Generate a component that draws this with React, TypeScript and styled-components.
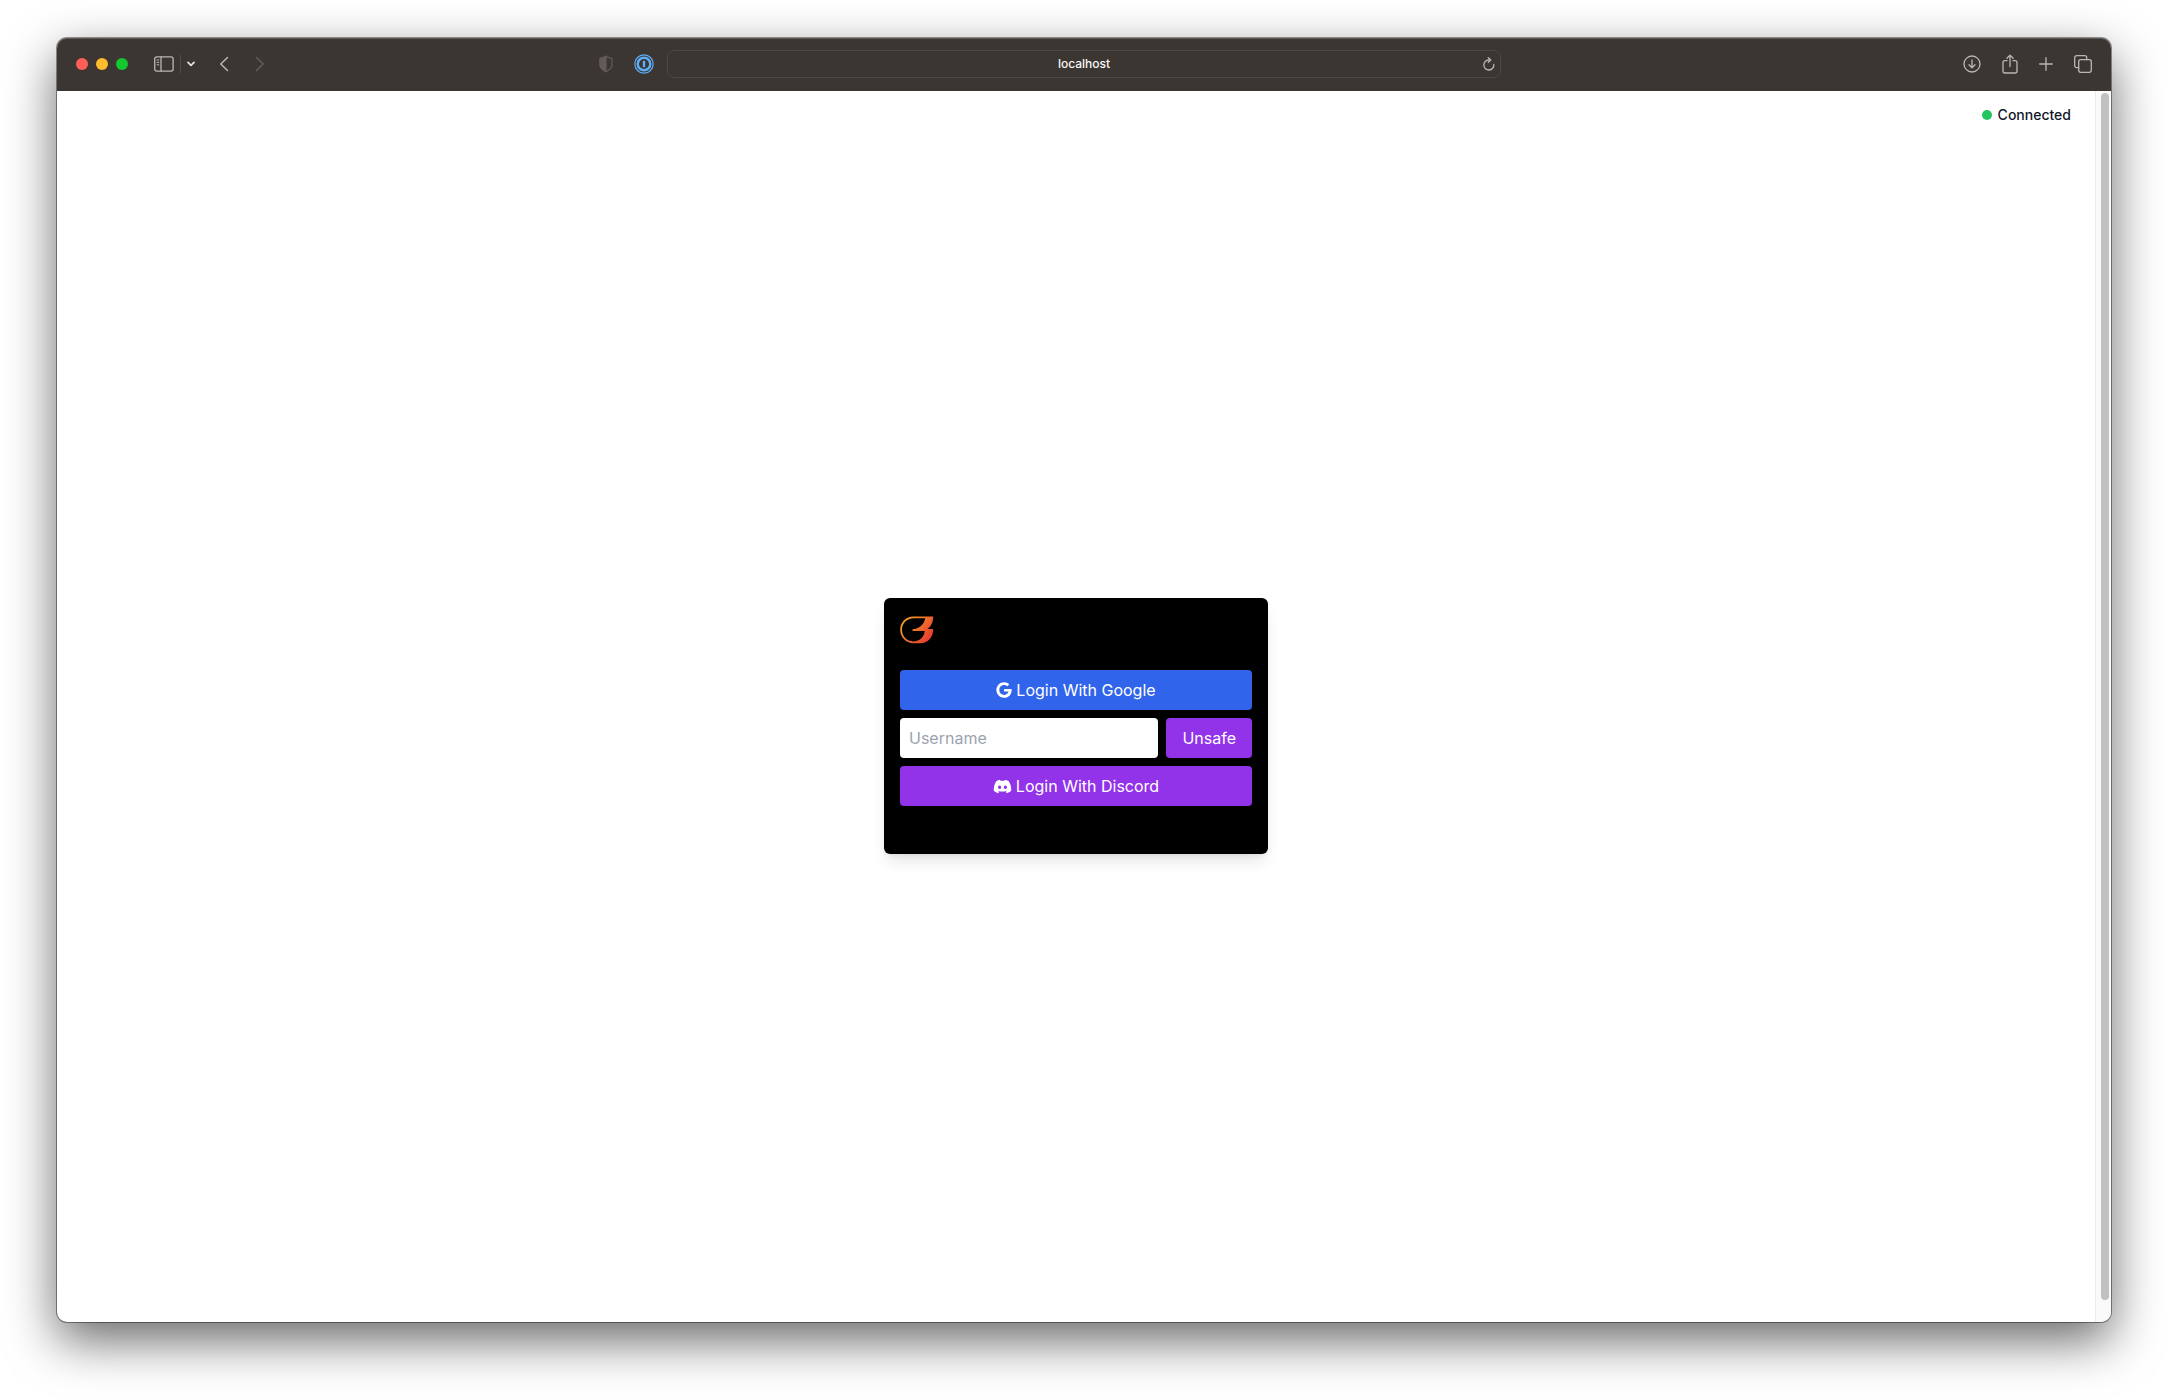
import React from "react";
import styled, { createGlobalStyle } from "styled-components";
import { FaDiscord, FaGoogle } from "react-icons/fa6";

const Global = createGlobalStyle`
  *, *::before, *::after { box-sizing: border-box; }
  body {
    margin: 0;
    background: #fff;
    font-family: Inter, "Liberation Sans", sans-serif;
    color: #0f172a;
  }
  button, input { font: inherit; }
`;

const Desktop = styled.div`
  min-height: 100vh;
  display: flex;
  padding: 38px 57px 75px;
  overflow: hidden;
`;

const Window = styled.div`
  flex: 1;
  min-width: 0;
  display: flex;
  flex-direction: column;
  border-radius: 10px;
  background: #fff;
  box-shadow: 0 0 0 1px rgba(0, 0, 0, 0.4), 0 18px 50px rgba(0, 0, 0, 0.6);
`;

const Toolbar = styled.header`
  display: grid;
  grid-template-columns: 1fr minmax(0, 834px) 1fr;
  align-items: center;
  height: 53px;
  padding: 0 19px 2px;
  border-radius: 10px 10px 0 0;
  background: #3c3633;
  box-shadow: inset 0 1px 0 #5f5a58;
  color: #bbb6b4;
`;

const Group = styled.div<{ $gap?: number; $pad?: string }>`
  display: flex;
  align-items: center;
  gap: ${(p) => p.$gap ?? 0}px;
  padding: ${(p) => p.$pad ?? "0"};
`;

const Side = styled.div<{ $end?: boolean }>`
  display: flex;
  align-items: center;
  justify-content: ${(p) => (p.$end ? "flex-end" : "space-between")};
`;

const Light = styled.button<{ $color: string }>`
  width: 12px;
  height: 12px;
  padding: 0;
  border: 0;
  border-radius: 50%;
  background: ${(p) => p.$color};
`;

const IconButton = styled.button<{ $tone?: string }>`
  display: flex;
  padding: 0;
  border: 0;
  background: none;
  color: ${(p) => p.$tone ?? "inherit"};

  svg {
    display: block;
    fill: none;
    stroke: currentColor;
    stroke-linecap: round;
    stroke-linejoin: round;
  }
`;

const Divider = styled.span`
  width: 1px;
  height: 18px;
  background: #504a48;
`;

const AddressBar = styled.div`
  display: grid;
  grid-template-columns: 14px 1fr 14px;
  align-items: center;
  height: 28px;
  padding: 0 4px;
  border: 1px solid #4e4845;
  border-radius: 7px;
`;

const Address = styled.input`
  grid-column: 2;
  width: 100%;
  padding: 0;
  border: 0;
  outline: 0;
  background: none;
  color: #f8f7f6;
  font-size: 12px;
  font-weight: 500;
  line-height: 16px;
  text-align: center;
`;

const Viewport = styled.div`
  flex: 1;
  display: flex;
`;

const Page = styled.div`
  flex: 1;
  display: flex;
  flex-direction: column;
`;

const StatusBar = styled.div`
  display: flex;
  align-items: center;
  justify-content: flex-end;
  gap: 6px;
  height: 39px;
  padding: 8px 24px 0;
  font-size: 14px;
  font-weight: 500;
  line-height: 20px;
`;

const StatusDot = styled.span`
  width: 10px;
  height: 10px;
  border-radius: 50%;
  background: #22c55e;
`;

const Main = styled.main`
  flex: 1;
  display: flex;
  align-items: center;
  justify-content: center;
`;

const Card = styled.form`
  display: flex;
  flex-direction: column;
  gap: 8px;
  width: 384px;
  padding: 16px 16px 48px;
  border-radius: 6px;
  background: #000;
  box-shadow: 0 10px 15px -3px rgba(0, 0, 0, 0.1), 0 4px 6px -4px rgba(0, 0, 0, 0.1);
`;

const Brand = styled.div`
  height: 48px;
  padding-top: 2px;

  svg { display: block; }
`;

const Row = styled.div`
  display: flex;
  gap: 8px;
`;

const Button = styled.button<{ $color: string; $iconSize?: number }>`
  display: flex;
  align-items: center;
  justify-content: center;
  gap: 4px;
  height: 40px;
  padding: 0 16px;
  border: 0;
  border-radius: 4px;
  background: ${(p) => p.$color};
  color: #fff;
  font-size: 16px;
  line-height: 24px;

  svg {
    width: auto;
    height: ${(p) => p.$iconSize ?? 16}px;
  }
`;

const Username = styled.input`
  flex: 1;
  min-width: 0;
  height: 40px;
  padding: 0 9px;
  border: 0;
  border-radius: 4px;
  background: #fff;
  color: #0f172a;
  font-size: 16px;

  &::placeholder { color: #9ca3af; opacity: 1; }
`;

const Track = styled.div`
  width: 16px;
  padding: 2px 2px 2px 5px;
  border-left: 1px solid #ebebeb;
  border-radius: 0 0 10px 0;
  background: #fafafa;
`;

const Thumb = styled.div`
  width: 8px;
  height: calc(100% - 20px);
  border-radius: 4px;
  background: #c1c1c1;
`;

const SidebarIcon = () => (
  <svg width="20" height="16" viewBox="0 0 20 16" strokeWidth="1.3">
    <rect x="0.7" y="0.9" width="18.4" height="14.2" rx="2" />
    <path d="M7 1v14" />
    <path d="M3 4h1.8M3 6.4h1.8M3 8.8h1.8" strokeWidth="1" />
  </svg>
);

const ShieldIcon = () => (
  <svg width="14" height="18" viewBox="0 0 14 18" strokeWidth="1.2">
    <path d="M7 1.2c1.8 1.3 3.7 1.9 6 2.1v6.7c0 3-2.6 5-6 6.8C3.6 15 1 13 1 10V3.3C3.3 3.1 5.2 2.5 7 1.2z" />
    <path d="M7 1.2v15.6C3.6 15 1 13 1 10V3.3C3.3 3.1 5.2 2.5 7 1.2z" fill="currentColor" />
  </svg>
);

const PasswordIcon = () => (
  <svg width="20" height="20" viewBox="0 0 20 20">
    <circle cx="10" cy="10" r="9.2" strokeWidth="1.2" />
    <circle cx="10" cy="10" r="6.3" strokeWidth="2.5" />
    <path d="M10 6.800v6.400" strokeWidth="2.4" strokeLinecap="butt" />
  </svg>
);

const Logo = () => (
  <svg width="34" height="28" viewBox="0 0 34 28" role="img" aria-label="Logo">
    <defs>
      <linearGradient id="flame" x1="2" y1="2" x2="30" y2="26" gradientUnits="userSpaceOnUse">
        <stop offset="0" stopColor="#f5a623" />
        <stop offset="0.5" stopColor="#f0702c" />
        <stop offset="1" stopColor="#e5352f" />
      </linearGradient>
    </defs>
    <path
      fill="url(#flame)"
      fillRule="evenodd"
      d="M13.5 0.5H33.2C33.2 6 31 10.5 27.5 13H33.2C33.2 21.5 28 27.2 20 27.2H13.5C6 27.2 0.2 21.3 0.2 13.8S6 0.5 13.5 0.5ZM13.5 2.2C7 2.2 2 7.3 2 13.8S7 25.4 13.5 25.4C19.5 25.4 24 21 24.8 15H12.5V13.2C19 12.7 24 9 25.2 2.2Z"
    />
  </svg>
);

export default function App() {
  return (
    <>
      <Global />
      <Desktop>
        <Window>
          <Toolbar>
            <Side>
              <Group>
                <Group $gap={8} $pad="0 26px 0 0">
                  <Light type="button" aria-label="Close" $color="#ff5f57" />
                  <Light type="button" aria-label="Minimize" $color="#febc2e" />
                  <Light type="button" aria-label="Zoom" $color="#14c82f" />
                </Group>
                <Group $gap={6} $pad="0 24px 0 0">
                  <IconButton type="button" aria-label="Sidebar"><SidebarIcon /></IconButton>
                  <Divider />
                  <IconButton type="button" aria-label="Tab groups" $tone="#e6e3e1">
                    <svg width="8" height="6" viewBox="0 0 8 6" strokeWidth="1.7"><path d="M1 1.3l3 3 3-3" /></svg>
                  </IconButton>
                </Group>
                <Group $gap={26}>
                  <IconButton type="button" aria-label="Back">
                    <svg width="10" height="16" viewBox="0 0 10 16" strokeWidth="1.5"><path d="M8.500 1.500L1.800 8l6.700 6.500" /></svg>
                  </IconButton>
                  <IconButton type="button" aria-label="Forward" $tone="#625c5a">
                    <svg width="10" height="16" viewBox="0 0 10 16" strokeWidth="1.5"><path d="M1.500 1.500L8.200 8l-6.700 6.500" /></svg>
                  </IconButton>
                </Group>
              </Group>
              <Group $gap={21} $pad="0 13px 0 0">
                <IconButton type="button" aria-label="Privacy report" $tone="#625b59"><ShieldIcon /></IconButton>
                <IconButton type="button" aria-label="Passwords" $tone="#5eaef5"><PasswordIcon /></IconButton>
              </Group>
            </Side>
            <AddressBar>
              <Address aria-label="Address" defaultValue="localhost" />
              <IconButton type="button" aria-label="Reload">
                <svg width="14" height="14" viewBox="0 0 14 14" strokeWidth="1.3">
                  <path d="M11.800 7.500A5 5 0 1 1 6.800 3h1.600" />
                  <path d="M6.300 0.700L8.700 3 6.300 5.300" />
                </svg>
              </IconButton>
            </AddressBar>
            <Side $end>
              <Group $gap={21}>
                <IconButton type="button" aria-label="Downloads">
                  <svg width="18" height="18" viewBox="0 0 18 18" strokeWidth="1.3">
                    <circle cx="9" cy="9" r="8" />
                    <path d="M9 5v7.500M6 9.800l3 2.900 3-2.900" />
                  </svg>
                </IconButton>
                <IconButton type="button" aria-label="Share">
                  <svg width="16" height="20" viewBox="0 0 16 20" strokeWidth="1.3">
                    <path d="M5 6.700H3a2 2 0 0 0-2 2V17a2 2 0 0 0 2 2h10a2 2 0 0 0 2-2V8.700a2 2 0 0 0-2-2h-2" />
                    <path d="M8 12.500V1.200M4.900 4.200L8 1.100l3.100 3.100" />
                  </svg>
                </IconButton>
                <IconButton type="button" aria-label="New tab">
                  <svg width="14" height="14" viewBox="0 0 14 14" strokeWidth="1.3"><path d="M7 .7v12.600M.7 7h12.600" /></svg>
                </IconButton>
                <IconButton type="button" aria-label="Tab overview">
                  <svg width="18" height="18" viewBox="0 0 18 18" strokeWidth="1.3">
                    <rect x="4.7" y="4.7" width="12.6" height="12.6" rx="2" />
                    <path d="M4.700 12.700H2.700a2 2 0 0 1-2-2v-8a2 2 0 0 1 2-2h8a2 2 0 0 1 2 2v2" />
                  </svg>
                </IconButton>
              </Group>
            </Side>
          </Toolbar>
          <Viewport>
            <Page>
              <StatusBar role="status"><StatusDot />Connected</StatusBar>
              <Main>
                <Card onSubmit={(e) => e.preventDefault()}>
                  <Brand><Logo /></Brand>
                  <Button type="button" $color="#2f64eb"><FaGoogle />Login With Google</Button>
                  <Row>
                    <Username aria-label="Username" placeholder="Username" />
                    <Button type="submit" $color="#9232e9">Unsafe</Button>
                  </Row>
                  <Button type="button" $color="#9232e9" $iconSize={19}><FaDiscord />Login With Discord</Button>
                </Card>
              </Main>
            </Page>
            <Track><Thumb /></Track>
          </Viewport>
        </Window>
      </Desktop>
    </>
  );
}
